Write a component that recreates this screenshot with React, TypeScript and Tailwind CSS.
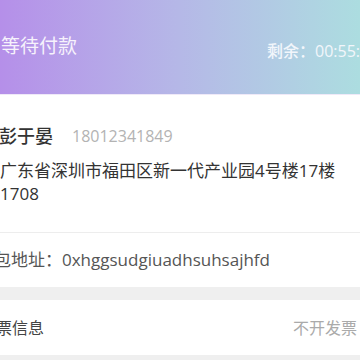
const font = { fontFamily: '"Open Sans", "Noto Sans CJK SC", sans-serif' }

export default function App() {
  return (
    <div className="w-[360px] h-[360px] overflow-hidden bg-white" style={font}>
      {/* status header */}
      <div className="h-[95px] flex bg-gradient-to-r from-[#b58fe9] via-[#b5b8e7] to-[#acdde0] border-b border-[#efe9f8]">
        <div className="w-[267px] shrink-0 pt-[32px] pl-[1px] text-[19px] leading-[28px] text-[#f6f2fc]">等待付款</div>
        <div className="pt-[39px] whitespace-nowrap text-[16px] leading-[24px] font-medium text-[#f2f6fb]">剩余：00:55:21</div>
      </div>

      {/* address */}
      <div className="pt-[29px] pb-[27px] border-b border-[#ededed]">
        <div className="flex items-center ml-[-1px] leading-[24px]">
          <span className="text-[18px] font-medium text-[#333]">彭于晏</span>
          <span className="ml-[19px] text-[16px] text-[#b3b3b3]">18012341849</span>
        </div>
        <div className="mt-[11px] w-[350px] text-[17px] leading-[23px] text-[#333]">
          广东省深圳市福田区新一代产业园4号楼17楼1708
        </div>
      </div>

      {/* wallet */}
      <div className="h-[54px] flex items-center ml-[-23px] text-[17px] text-[#555] whitespace-nowrap">
        钱包地址：0xhggsudgiuadhsuhsajhfd
      </div>
      <div className="h-[13px] bg-[#efefef]" />

      {/* invoice */}
      <div className="h-[55px] flex items-center">
        <div className="w-[313px] shrink-0 ml-[-20px] text-[16px] text-[#444]">发票信息</div>
        <div className="whitespace-nowrap text-[16px] text-[#aaa]">不开发票 ›</div>
      </div>
      <div className="h-[13px] bg-[#efefef]" />
    </div>
  )
}
